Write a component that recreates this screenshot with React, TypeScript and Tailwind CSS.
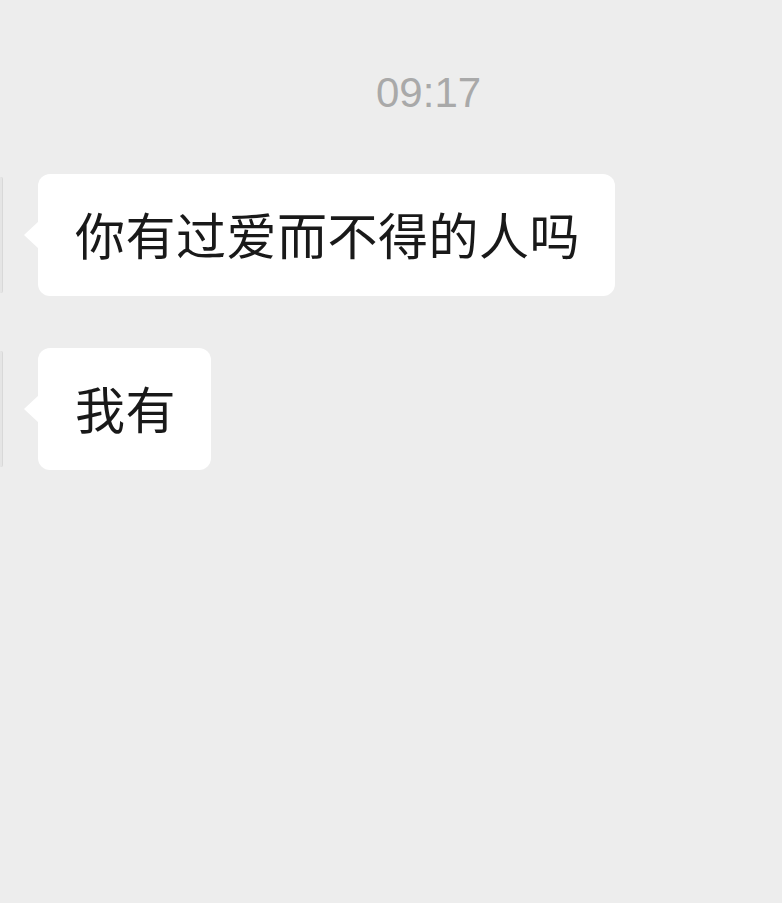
import React from "react";

const cjk = { fontFamily: '"Noto Sans CJK SC", "Noto Sans", sans-serif' };

function Bubble({ text }: { text: string }) {
  return (
    <div className="flex items-center">
      {/* avatar, cropped off the left edge */}
      <div className="w-[3px] h-[116px] rounded-r-[2px] bg-[#e5e5e5] border-r border-[#d8d8d8]" />
      <div className="relative ml-[35px] h-[122px] flex items-center rounded-[12px] bg-white pl-[37px] pr-[35px]">
        <div className="absolute left-[-14px] top-1/2 -translate-y-1/2 w-0 h-0 border-y-[14px] border-y-transparent border-r-[15px] border-r-white" />
        <span className="text-[50px] leading-none tracking-[0.5px] text-[#191919] -mt-[4px]" style={cjk}>
          {text}
        </span>
      </div>
    </div>
  );
}

export default function App() {
  return (
    <div className="w-[782px] h-[903px] bg-[#ededed] overflow-hidden">
      <div className="pt-[70px] pl-[376px]">
        <span
          className="text-[42px] leading-[46px] text-[#a9a9a9]"
          style={{ fontFamily: '"Liberation Sans", Arial, sans-serif' }}
        >
          09:17
        </span>
      </div>
      <div className="mt-[58px] flex flex-col gap-[52px]">
        <Bubble text="你有过爱而不得的人吗" />
        <Bubble text="我有" />
      </div>
    </div>
  );
}
